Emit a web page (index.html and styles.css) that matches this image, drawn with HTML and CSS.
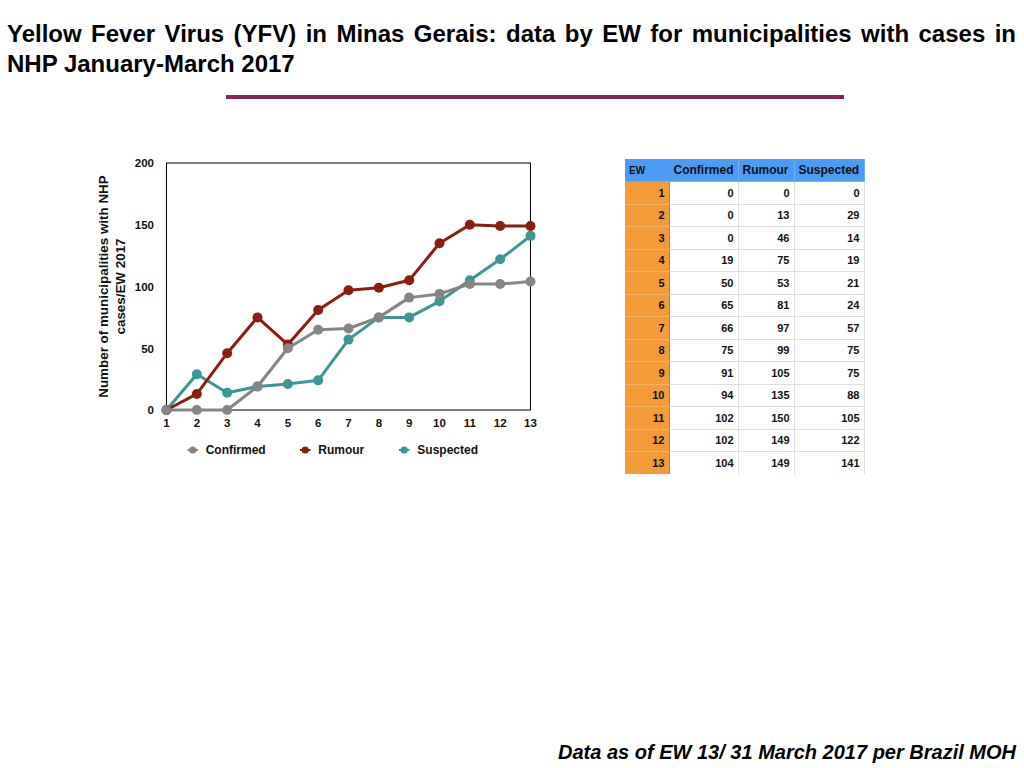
FILE: index.html
```html
<!DOCTYPE html>
<html lang="en">
<head>
<meta charset="utf-8">
<title>Yellow Fever Virus (YFV) in Minas Gerais</title>
<link rel="stylesheet" href="styles.css">
</head>
<body>
<div class="slide">
  <h1 class="title">Yellow Fever Virus (YFV) in Minas Gerais: data by EW for municipalities with cases in NHP January-March 2017</h1>
  <div class="rule"></div>
  <div class="content">
    <svg class="chart" viewBox="90 150 460 320" width="460" height="320" xmlns="http://www.w3.org/2000/svg">
      <defs>
        <marker id="m-conf" markerUnits="userSpaceOnUse" markerWidth="12" markerHeight="12" refX="6" refY="6" viewBox="0 0 12 12"><circle cx="6" cy="6" r="5" fill="#858585"/></marker>
        <marker id="m-rum" markerUnits="userSpaceOnUse" markerWidth="12" markerHeight="12" refX="6" refY="6" viewBox="0 0 12 12"><circle cx="6" cy="6" r="5" fill="#8c1d10"/></marker>
        <marker id="m-sus" markerUnits="userSpaceOnUse" markerWidth="12" markerHeight="12" refX="6" refY="6" viewBox="0 0 12 12"><circle cx="6" cy="6" r="5" fill="#3d9696"/></marker>
      </defs>
      <rect class="plot" x="166.5" y="163" width="364" height="247"/>
      <g class="ytick">
        <text x="154" y="167">200</text>
        <text x="154" y="229">150</text>
        <text x="154" y="290.5">100</text>
        <text x="154" y="352.5">50</text>
        <text x="154" y="414">0</text>
      </g>
      <g class="xtick">
        <text x="166.5" y="426.5">1</text>
        <text x="196.83" y="426.5">2</text>
        <text x="227.17" y="426.5">3</text>
        <text x="257.5" y="426.5">4</text>
        <text x="287.83" y="426.5">5</text>
        <text x="318.17" y="426.5">6</text>
        <text x="348.5" y="426.5">7</text>
        <text x="378.83" y="426.5">8</text>
        <text x="409.17" y="426.5">9</text>
        <text x="439.5" y="426.5">10</text>
        <text x="469.83" y="426.5">11</text>
        <text x="500.17" y="426.5">12</text>
        <text x="530.5" y="426.5">13</text>
      </g>
      <g class="ytitle">
        <text transform="translate(107.8 286.5) rotate(-90)">Number of municipalities with NHP</text>
        <text transform="translate(124.5 286.5) rotate(-90)">cases/EW 2017</text>
      </g>
      <polyline class="series suspected" points="166.5,410 196.83,374.19 227.17,392.71 257.5,386.54 287.83,384.07 318.17,380.36 348.5,339.6 378.83,317.38 409.17,317.38 439.5,301.32 469.83,280.33 500.17,259.33 530.5,235.87"/>
      <polyline class="series rumour" points="166.5,410 196.83,393.95 227.17,353.19 257.5,317.38 287.83,344.55 318.17,309.97 348.5,290.2 378.83,287.74 409.17,280.33 439.5,243.28 469.83,224.75 500.17,225.99 530.5,225.99"/>
      <polyline class="series confirmed" points="166.5,410 196.83,410 227.17,410 257.5,386.54 287.83,348.25 318.17,329.73 348.5,328.49 378.83,317.38 409.17,297.62 439.5,293.91 469.83,284.03 500.17,284.03 530.5,281.56"/>
      <g class="legend">
        <line class="lg-conf" x1="187.5" y1="450" x2="198" y2="450"/>
        <circle cx="192.7" cy="450" r="3.6" fill="#858585"/>
        <text x="205.7" y="454.2">Confirmed</text>
        <line class="lg-rum" x1="300" y1="450" x2="310.5" y2="450"/>
        <circle cx="305.2" cy="450" r="3.6" fill="#8c1d10"/>
        <text x="318.3" y="454.2">Rumour</text>
        <line class="lg-sus" x1="399" y1="450" x2="409.5" y2="450"/>
        <circle cx="404.2" cy="450" r="3.6" fill="#3d9696"/>
        <text x="417.3" y="454.2">Suspected</text>
      </g>
    </svg>
    <table class="data-table">
      <colgroup>
        <col class="c-ew"><col class="c-conf"><col class="c-rum"><col class="c-sus">
      </colgroup>
      <thead>
        <tr><th class="ew">EW</th><th>Confirmed</th><th>Rumour</th><th>Suspected</th></tr>
      </thead>
      <tbody>
        <tr><td class="ew">1</td><td>0</td><td>0</td><td>0</td></tr>
        <tr><td class="ew">2</td><td>0</td><td>13</td><td>29</td></tr>
        <tr><td class="ew">3</td><td>0</td><td>46</td><td>14</td></tr>
        <tr><td class="ew">4</td><td>19</td><td>75</td><td>19</td></tr>
        <tr><td class="ew">5</td><td>50</td><td>53</td><td>21</td></tr>
        <tr><td class="ew">6</td><td>65</td><td>81</td><td>24</td></tr>
        <tr><td class="ew">7</td><td>66</td><td>97</td><td>57</td></tr>
        <tr><td class="ew">8</td><td>75</td><td>99</td><td>75</td></tr>
        <tr><td class="ew">9</td><td>91</td><td>105</td><td>75</td></tr>
        <tr><td class="ew">10</td><td>94</td><td>135</td><td>88</td></tr>
        <tr><td class="ew">11</td><td>102</td><td>150</td><td>105</td></tr>
        <tr><td class="ew">12</td><td>102</td><td>149</td><td>122</td></tr>
        <tr><td class="ew">13</td><td>104</td><td>149</td><td>141</td></tr>
      </tbody>
    </table>
  </div>
  <p class="source">Data as of EW 13/ 31 March 2017 per Brazil MOH</p>
</div>
</body>
</html>
```

FILE: styles.css
```css
html, body {
  margin: 0;
  padding: 0;
  background: #ffffff;
}

body {
  font-family: "Liberation Sans", Arial, sans-serif;
  color: #000000;
}

.slide {
  width: 1024px;
  height: 768px;
  display: flex;
  flex-direction: column;
  box-sizing: border-box;
  overflow: hidden;
}

.title {
  margin: 19px 8px 0 7px;
  font-size: 24px;
  line-height: 30px;
  font-weight: bold;
  text-align: justify;
  color: #000000;
}

.rule {
  margin: 16px 0 0 226px;
  width: 618px;
  height: 4px;
  background: #8b2552;
}

.content {
  display: flex;
  align-items: flex-start;
  margin-top: 51px;
}

.chart {
  display: block;
  margin-left: 90px;
  flex: none;
}

.chart text {
  font-family: "Liberation Sans", Arial, sans-serif;
  font-weight: bold;
  fill: #111111;
}

.plot {
  fill: none;
  stroke: #000000;
  stroke-width: 1;
}

.ytick text {
  font-size: 11.5px;
  text-anchor: end;
}

.xtick text {
  font-size: 11.5px;
  text-anchor: middle;
}

.ytitle text {
  font-size: 13.4px;
  text-anchor: middle;
}

.legend text {
  font-size: 12px;
}

.series {
  fill: none;
  stroke-width: 3;
  stroke-linejoin: round;
}

.confirmed {
  stroke: #858585;
  marker-start: url(#m-conf);
  marker-mid: url(#m-conf);
  marker-end: url(#m-conf);
}

.rumour {
  stroke: #8c1d10;
  marker-start: url(#m-rum);
  marker-mid: url(#m-rum);
  marker-end: url(#m-rum);
}

.suspected {
  stroke: #3d9696;
  marker-start: url(#m-sus);
  marker-mid: url(#m-sus);
  marker-end: url(#m-sus);
}

.lg-conf { stroke: #858585; stroke-width: 2; }
.lg-rum { stroke: #8c1d10; stroke-width: 2; }
.lg-sus { stroke: #3d9696; stroke-width: 2; }

.data-table {
  margin: 9px 0 0 75px;
  border-collapse: collapse;
  table-layout: fixed;
  width: 239px;
  font-family: "Liberation Sans", Arial, sans-serif;
  font-weight: bold;
  font-size: 11px;
  color: #111111;
}

.c-ew { width: 44px; }
.c-conf { width: 69px; }
.c-rum { width: 56px; }
.c-sus { width: 70px; }

.data-table th {
  height: 22px;
  padding: 0 0 0 4px;
  background: #4a9cf4;
  border: 1px solid #6fb0f6;
  border-top: none;
  text-align: left;
  font-size: 12px;
  white-space: nowrap;
  overflow: hidden;
}

.data-table th.ew {
  font-size: 10px;
  border-left: none;
  border-right-color: #7a8fa6;
}

.data-table td {
  height: 21.5px;
  padding: 0 4px 0 0;
  border: 1px solid #dedede;
  text-align: right;
  background: #ffffff;
}

.data-table td.ew {
  background: #f29b38;
  border-color: #f5b266;
  border-left: none;
  border-right: 1px solid #8a8a8a;
}

.data-table tr:last-child td {
  border-bottom: none;
}

.source {
  margin: auto 8px 4px 0;
  text-align: right;
  font-size: 20px;
  line-height: 23px;
  font-weight: bold;
  font-style: italic;
}
```
